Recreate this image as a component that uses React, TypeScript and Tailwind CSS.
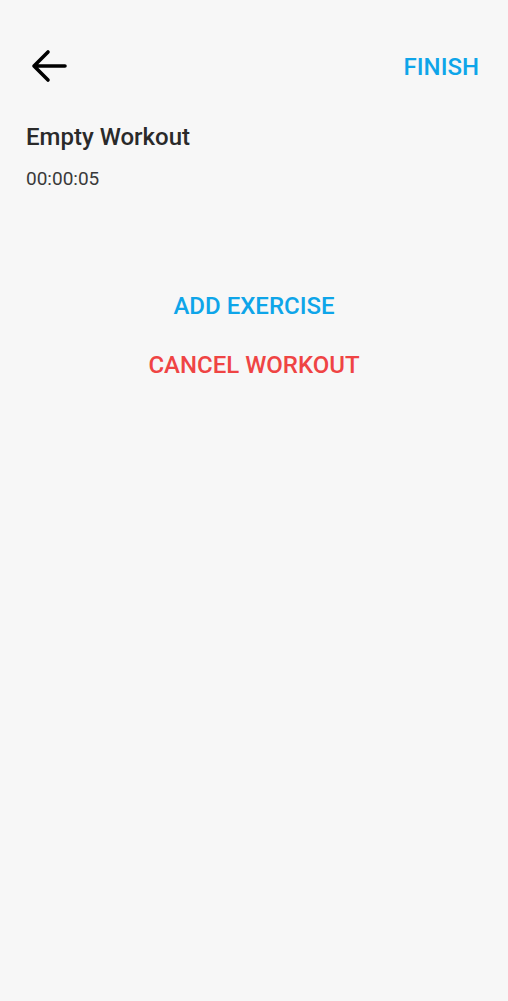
export default function App() {
  return (
    <div
      className="flex min-h-[1001px] w-full flex-col bg-[#f7f7f7]"
      style={{ fontFamily: 'Roboto, "Noto Sans", sans-serif' }}
    >
      <div className="flex items-center justify-between pl-[29px] pr-[29px] pt-[46px]">
        <button className="flex h-[40px] w-[40px] items-center justify-center">
          <svg width="40" height="40" viewBox="0 0 40 40" fill="none">
            <path
              d="M36 20H5M19 6L5 20l14 14"
              stroke="#000"
              strokeWidth="3.6"
              strokeLinecap="round"
              strokeLinejoin="round"
            />
          </svg>
        </button>
        <button className="mt-[2px] text-[24px] font-medium leading-[28px] text-[#0ea5e9]">FINISH</button>
      </div>

      <div className="px-[26px] pt-[37px]">
        <p className="text-[24px] font-medium leading-[28px] text-[#2a2a2a]">Empty Workout</p>
        <p className="mt-[16px] text-[19px] leading-[24px] text-[#3a3a3a]">00:00:05</p>
      </div>

      <div className="flex flex-col items-center pt-[101px]">
        <button className="text-[24px] font-medium leading-[28px] text-[#0ea5e9]">ADD EXERCISE</button>
        <button className="mt-[31px] text-[24px] font-medium leading-[28px] text-[#ef4444]">
          CANCEL WORKOUT
        </button>
      </div>
    </div>
  )
}
